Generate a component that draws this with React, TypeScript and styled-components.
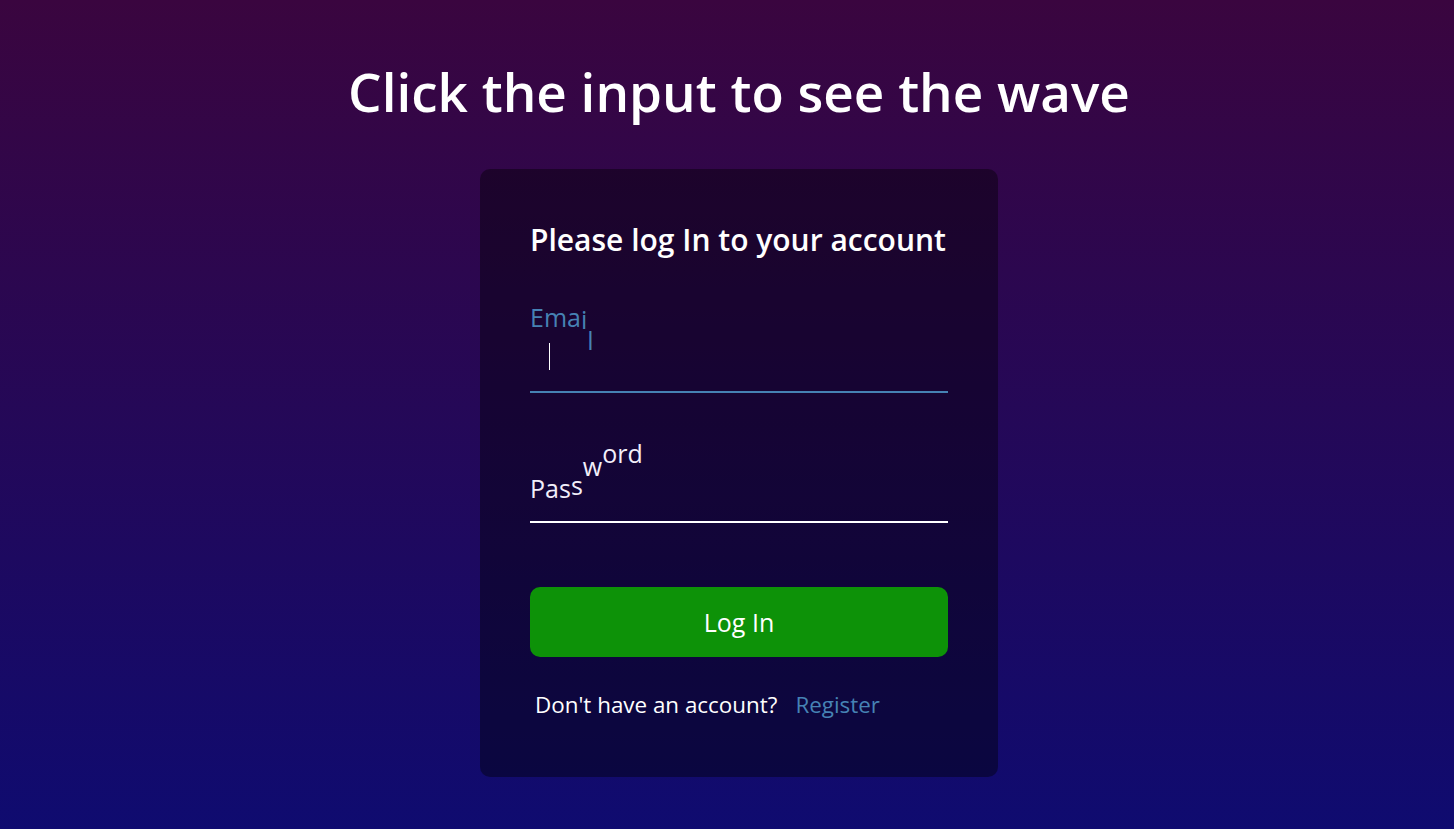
import React from 'react';
import styled, { createGlobalStyle } from 'styled-components';

const GlobalStyle = createGlobalStyle`
  * {
    box-sizing: border-box;
  }

  body {
    margin: 0;
    font-family: 'Open Sans', 'Noto Sans', sans-serif;
    color: #fff;
  }
`;

const Page = styled.main`
  min-height: 100vh;
  display: flex;
  flex-direction: column;
  align-items: center;
  padding: 56px 0 0 24px;
  background: linear-gradient(to bottom, #3a053f 0%, #0f0b70 100%);
  overflow: hidden;
`;

const Title = styled.h1`
  margin: 0 0 41px;
  font-size: 53px;
  font-weight: 600;
  line-height: 72px;
`;

const Card = styled.section`
  width: 518px;
  padding: 50px 50px 57px;
  background-color: rgba(0, 0, 0, 0.4);
  border-radius: 10px;
`;

const CardTitle = styled.h2`
  margin: 0 0 63px;
  font-size: 30px;
  font-weight: 600;
  line-height: 42px;
  white-space: nowrap;
`;

const FormControl = styled.div<{ $gap: number }>`
  position: relative;
  width: 100%;
  margin-bottom: ${p => p.$gap}px;
`;

const Input = styled.input<{ $active?: boolean }>`
  display: block;
  width: 100%;
  height: 69px;
  padding: 20px 0;
  background: transparent;
  border: 0;
  border-bottom: 2px solid ${p => (p.$active ? '#4682b4' : '#fff')};
  font-family: inherit;
  font-size: 20px;
  color: #fff;
  outline: none;
  caret-color: transparent;
`;

const Label = styled.label`
  position: absolute;
  top: 17px;
  left: 0;
  pointer-events: none;
  white-space: nowrap;
`;

const Letter = styled.span<{ $active?: boolean }>`
  display: inline-block;
  min-width: 5px;
  font-size: 25px;
  line-height: normal;
  color: ${p => (p.$active ? '#4682b4' : '#f2effa')};
`;

const Caret = styled.span`
  position: absolute;
  left: 19px;
  top: 19px;
  width: 1px;
  height: 27px;
  background: #fff;
`;

const SubmitButton = styled.button`
  display: block;
  width: 100%;
  height: 70px;
  border: 0;
  border-radius: 10px;
  background-color: #0d9208;
  color: #fff;
  font-family: inherit;
  font-size: 25px;
  cursor: pointer;
`;

const FooterText = styled.p`
  margin: 33px 0 0 5px;
  font-size: 22.4px;
  line-height: 30px;
  color: #fff;

  a {
    margin-left: 18px;
    color: #4682b4;
    text-decoration: none;
  }
`;

type WaveLabelProps = {
  text: string;
  offsets: number[];
  active?: boolean;
};

const WaveLabel = ({ text, offsets, active }: WaveLabelProps) => (
  <Label>
    {text.split('').map((ch, i) => (
      <Letter
        key={i}
        $active={active}
        style={{ transform: `translateY(${offsets[i] || 0}px)` }}
      >
        {ch}
      </Letter>
    ))}
  </Label>
);

export default function App() {
  return (
    <>
      <GlobalStyle />
      <Page>
        <Title>Click the input to see the wave</Title>
        <Card>
          <CardTitle>Please log In to your account</CardTitle>
          <form onSubmit={e => e.preventDefault()}>
            <FormControl $gap={61}>
              <Input type='text' required $active />
              <WaveLabel text='Email' offsets={[-41, -41, -41, -39, -18]} active />
              <Caret />
            </FormControl>
            <FormControl $gap={64}>
              <Input type='password' required />
              <WaveLabel text='Password' offsets={[0, 0, 0, -3, -22, -35, -35, -35]} />
            </FormControl>
            <SubmitButton type='submit'>Log In</SubmitButton>
            <FooterText>
              Don't have an account?<a href='#'>Register</a>
            </FooterText>
          </form>
        </Card>
      </Page>
    </>
  );
}
